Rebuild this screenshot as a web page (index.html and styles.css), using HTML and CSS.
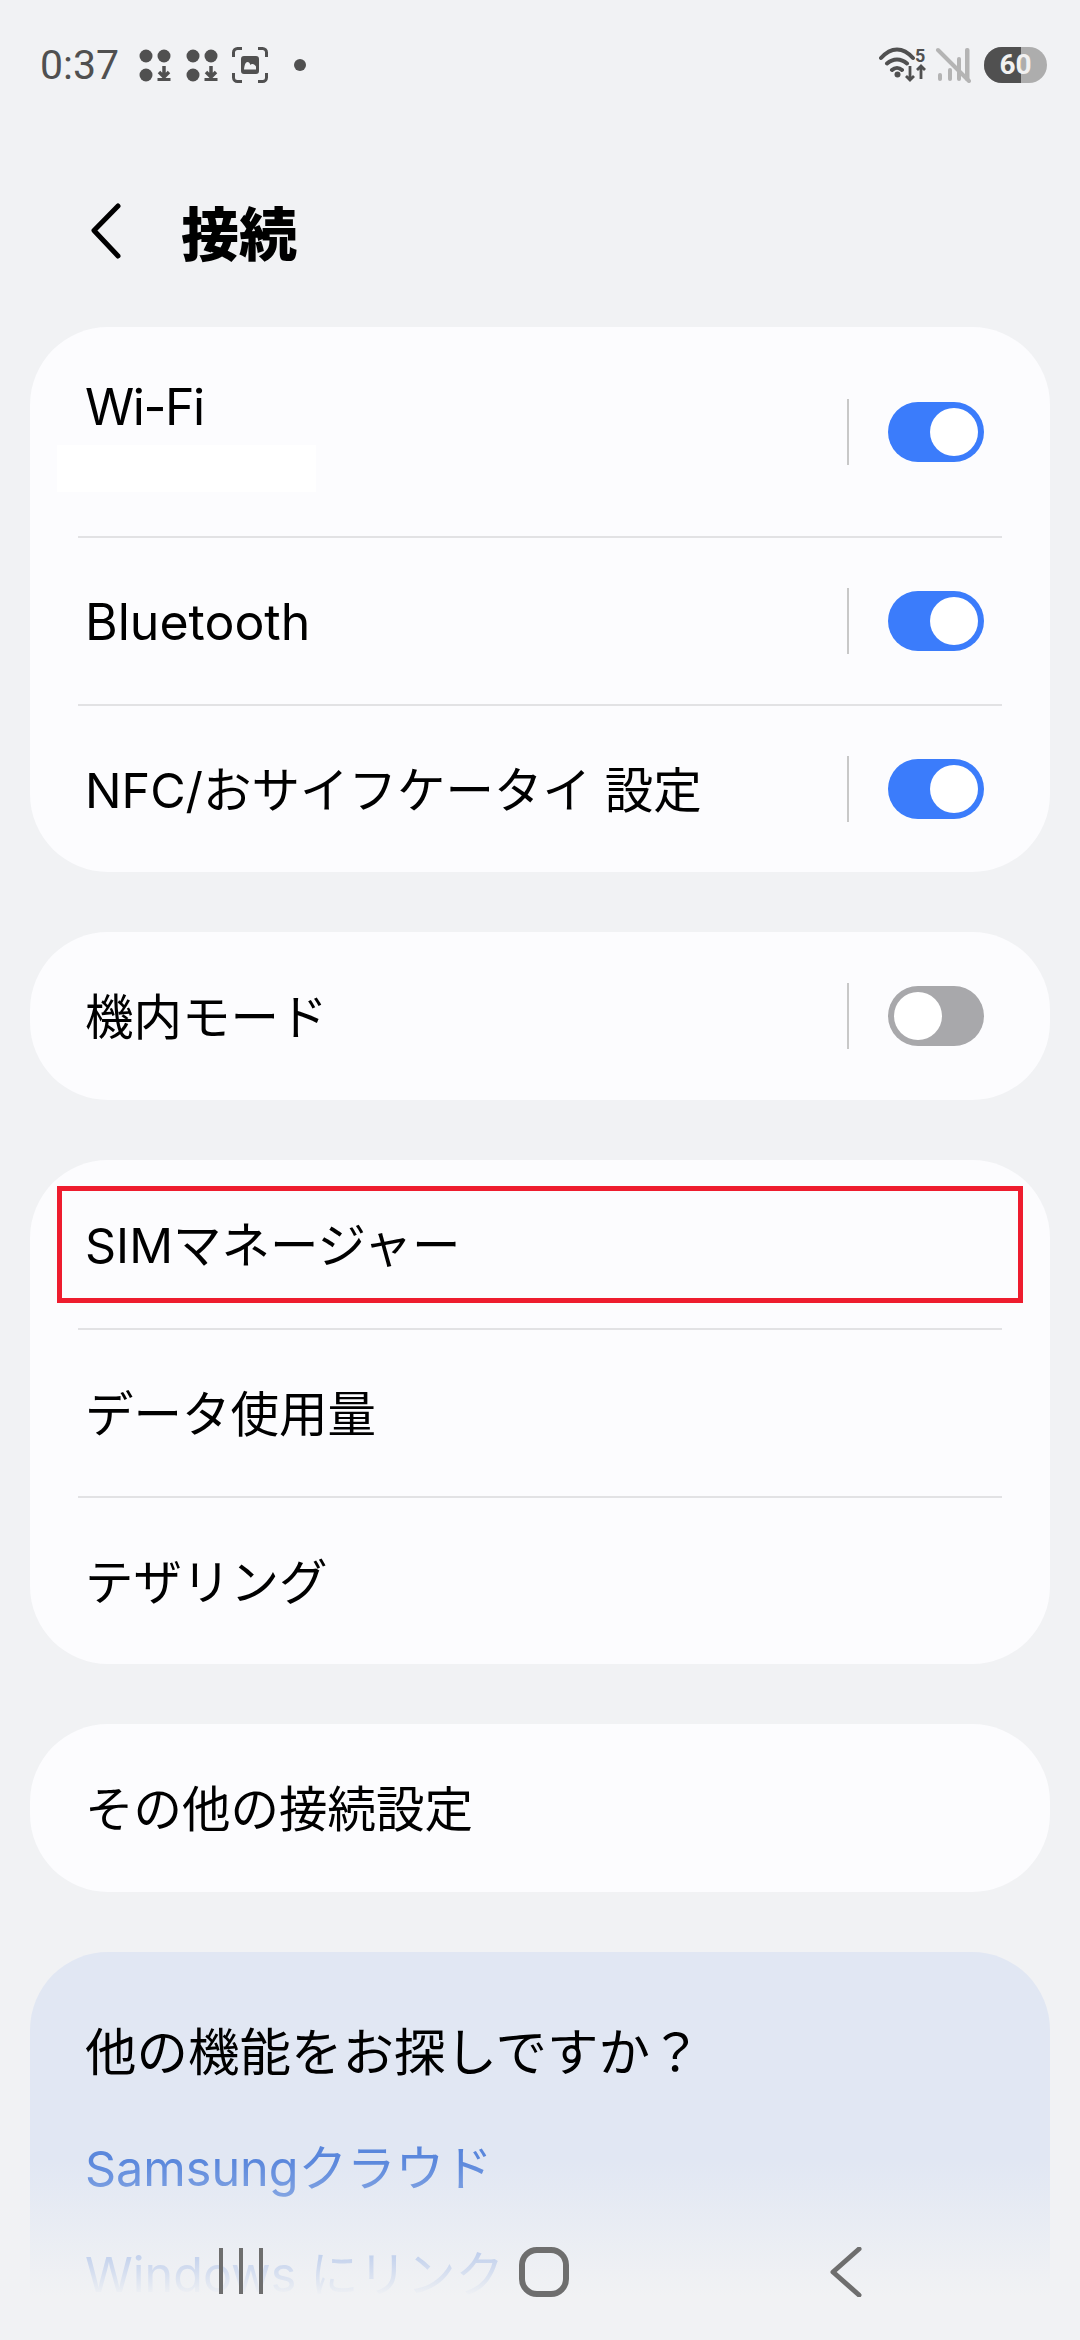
FILE: index.html
```html
<!DOCTYPE html>
<html lang="ja">
<head>
<meta charset="utf-8">
<title>接続</title>
<link rel="stylesheet" href="styles.css">
</head>
<body>
<div class="screen">
  <div class="status">
    <div class="status-left">
      <span class="time">0:37</span>
      <svg class="ic-dl" viewBox="0 0 36 36"><circle cx="7" cy="9" r="6.500"/><circle cx="25" cy="9" r="6.500"/><circle cx="7" cy="28" r="6.500"/><path d="M25 19v11M20 25l5 5 5-5" class="dl-arrow"/><rect x="18.500" y="31" width="13" height="3"/></svg>
      <svg class="ic-dl" viewBox="0 0 36 36"><circle cx="7" cy="9" r="6.500"/><circle cx="25" cy="9" r="6.500"/><circle cx="7" cy="28" r="6.500"/><path d="M25 19v11M20 25l5 5 5-5" class="dl-arrow"/><rect x="18.500" y="31" width="13" height="3"/></svg>
      <svg class="ic-shot" viewBox="0 0 36 36"><path class="shot-frame" d="M1.500 10V5.500a4 4 0 0 1 4-4H10M26 1.500h4.500a4 4 0 0 1 4 4V10M34.500 26v4.500a4 4 0 0 1-4 4H26M10 34.500H5.500a4 4 0 0 1-4-4V26"/><path fill-rule="evenodd" d="M12 9h12a3 3 0 0 1 3 3v12a3 3 0 0 1-3 3H12a3 3 0 0 1-3-3V12a3 3 0 0 1 3-3zm0 13.500h12v-3c-1-1.500-2-2.500-3.500-2.500-1 0-1.500.5-2 1-.8-2-1.500-3-3-3-2 0-3 3-3.500 7.500z"/></svg>
      <span class="dot"></span>
    </div>
    <div class="status-right">
      <div class="wifi-wrap">
        <svg class="ic-wifi" viewBox="0 0 48 36"><path class="wifi-arc" d="M2 11C12 -.5 24 -.5 34 11M8 16.500c6-5.500 14-5.500 20 0M13 23c3-2.800 7-2.800 10 0"/><circle cx="18.500" cy="27.500" r="3"/><path class="wifi-dir" d="M31 19v14M27 29l4 4 4-4M42 32V19M38 23l4-4 4 4"/></svg>
        <span class="wifi-five">5</span>
      </div>
      <svg class="ic-signal" viewBox="0 0 36 36"><rect x="3" y="26" width="4" height="8" rx="2"/><rect x="13" y="21" width="4" height="13" rx="2"/><rect x="22" y="10" width="4" height="24" rx="2"/><rect x="30" y="1" width="4.500" height="33" rx="2"/><path class="signal-cross" d="M3 3l31 31"/></svg>
      <div class="battery"><span class="battery-fill"></span><span class="battery-text">60</span></div>
    </div>
  </div>

  <header class="header">
    <svg class="back" viewBox="0 0 30 56"><path d="M27 3L3 27.500 27 53"/></svg>
    <h1 class="title">接続</h1>
  </header>

  <main class="list">
    <section class="card">
      <div class="row row-wifi">
        <div class="wifi-text">
          <span class="label label-wifi">Wi-Fi</span>
          <span class="masked"></span>
        </div>
        <div class="ctrl"><span class="vline"></span><span class="toggle on"></span></div>
      </div>
      <div class="sep"></div>
      <div class="row"><span class="label label-latin">Bluetooth</span><div class="ctrl"><span class="vline"></span><span class="toggle on"></span></div></div>
      <div class="sep"></div>
      <div class="row"><span class="label">NFC/おサイフケータイ 設定</span><div class="ctrl"><span class="vline"></span><span class="toggle on"></span></div></div>
    </section>

    <section class="card card-single">
      <div class="row"><span class="label">機内モード</span><div class="ctrl"><span class="vline"></span><span class="toggle off"></span></div></div>
    </section>

    <section class="card card-sim">
      <div class="highlight"></div>
      <div class="row row-first"><span class="label">SIMマネージャー</span></div>
      <div class="sep"></div>
      <div class="row"><span class="label">データ使用量</span></div>
      <div class="sep"></div>
      <div class="row"><span class="label">テザリング</span></div>
    </section>

    <section class="card card-single">
      <div class="row"><span class="label">その他の接続設定</span></div>
    </section>

    <section class="card card-more">
      <h2 class="more-title">他の機能をお探しですか？</h2>
      <a class="more-link">Samsungクラウド</a>
      <a class="more-link">Windows にリンク</a>
    </section>
  </main>

  <div class="fade"></div>
  <nav class="nav">
    <svg class="nav-recent" viewBox="0 0 48 48"><path d="M3 1v46M23 1v46M43 1v46"/></svg>
    <svg class="nav-home" viewBox="0 0 50 50"><rect x="3" y="3" width="44" height="44" rx="15"/></svg>
    <svg class="nav-back" viewBox="0 0 32 50"><path d="M29 2L3 25l26 23"/></svg>
  </nav>
</div>
</body>
</html>
```

FILE: styles.css
```css
* { box-sizing: border-box; }
html, body { margin: 0; padding: 0; }
body { width: 1080px; height: 2340px; overflow: hidden; background: #f1f2f4; }

.screen {
  position: relative;
  width: 1080px;
  height: 2340px;
  overflow: hidden;
  background: #f1f2f4;
  color: #000;
  font-family: "Inter", "Noto Sans CJK JP", sans-serif;
}

/* status bar */
.status {
  height: 130px;
  padding: 0 33px 0 40px;
  display: flex;
  justify-content: space-between;
  align-items: flex-start;
  color: #505050;
}
.status-left { display: flex; align-items: center; height: 130px; }
.status-right { display: flex; align-items: center; height: 130px; }
.time { font-family: Roboto, sans-serif; font-size: 41px; line-height: 44px; width: 99px; color: #505050; }
svg { display: block; flex: none; }
.ic-dl { width: 36px; height: 36px; fill: #505050; margin-right: 11px; }
.dl-arrow { fill: none; stroke: #505050; stroke-width: 3.5; }
.ic-shot { width: 36px; height: 36px; fill: #505050; margin-left: -1px; }
.shot-frame { fill: none; stroke: #505050; stroke-width: 3; }
.dot { width: 12px; height: 12px; border-radius: 50%; background: #505050; margin-left: 26px; }

.wifi-wrap { position: relative; width: 48px; height: 36px; margin-right: 8px; }
.ic-wifi { width: 48px; height: 36px; fill: #505050; }
.wifi-arc { fill: none; stroke: #505050; stroke-width: 4; stroke-linecap: round; }
.wifi-dir { fill: none; stroke: #505050; stroke-width: 2.800; }
.wifi-five { position: absolute; left: 36px; top: 0; font-family: Roboto, sans-serif; font-size: 18px; line-height: 18px; font-weight: 700; color: #505050; }
.ic-signal { width: 36px; height: 36px; fill: #b4b4b4; margin-right: 13px; }
.signal-cross { fill: none; stroke: #b4b4b4; stroke-width: 4; stroke-linecap: round; }
.battery {
  position: relative;
  width: 63px;
  height: 36px;
  border-radius: 18px;
  overflow: hidden;
  background: #adadad;
  display: flex;
  align-items: center;
  justify-content: center;
}
.battery-fill { position: absolute; left: 0; top: 0; bottom: 0; width: 37px; background: #505050; }
.battery-text { position: relative; color: #f1f1f1; font-family: Roboto, sans-serif; font-weight: 700; font-size: 28px; line-height: 36px; }

/* header */
.header { height: 197px; padding: 0 0 0 91px; display: flex; align-items: flex-start; }
.back { width: 30px; height: 56px; margin-top: 73px; }
.back path { fill: none; stroke: #000; stroke-width: 5; stroke-linecap: round; stroke-linejoin: round; }
.title { margin: 66px 0 0 60px; font-size: 58px; line-height: 70px; font-weight: 900; font-family: "Noto Sans CJK JP", sans-serif; }

/* list */
.list { padding: 0 30px; display: flex; flex-direction: column; gap: 60px; }
.card { position: relative; background: #fcfcfe; border-radius: 78px; }
.row { height: 166px; padding: 0 66px 0 55px; display: flex; align-items: center; justify-content: space-between; }
.row-wifi { height: 209px; }
.row-first, .card-single .row { height: 168px; }
.label { font-size: 48.500px; line-height: 60px; color: #000; padding-top: 4px; }
.label-latin { font-size: 50px; padding-top: 2px; }
.label-wifi { font-size: 50px; letter-spacing: -1.500px; padding-top: 2px; }
.sep { height: 2px; margin: 0 48px; background: #e2e2e4; }
.wifi-text { display: flex; flex-direction: column; align-self: flex-start; padding-top: 48px; position: relative; }
.masked { display: block; width: 259px; height: 47px; margin: 8px 0 0 -28px; background: #fff; }
.ctrl { display: flex; align-items: center; gap: 39px; }
.vline { width: 2px; height: 66px; background: #c8c8c8; }
.toggle { position: relative; width: 96px; height: 60px; border-radius: 30px; }
.toggle::after { content: ""; position: absolute; top: 6px; width: 48px; height: 48px; border-radius: 50%; background: #fff; }
.toggle.on { background: #3b7cfb; }
.toggle.on::after { right: 6px; }
.toggle.off { background: #a8a8ab; }
.toggle.off::after { left: 6px; }

.highlight { position: absolute; left: 27px; top: 26px; width: 966px; height: 117px; border: 5px solid #ee1c2e; }

.card-more { height: 500px; padding: 65px 55px 0; background: #e1e7f3; }
.more-title { margin: 0; padding-bottom: 6px; font-size: 51.500px; line-height: 70px; font-weight: 400; }
.more-link { display: block; margin-top: 46px; font-size: 48.500px; line-height: 60px; color: #5a87dc; }

/* bottom overlay */
.fade {
  position: absolute;
  left: 0;
  right: 0;
  top: 2160px;
  height: 180px;
  background: linear-gradient(to bottom, rgba(241, 242, 244, 0), #f1f2f4 76%);
}
.nav { position: absolute; left: 0; right: 0; top: 2247px; height: 48px; }
.nav svg { position: absolute; top: 0; }
.nav path, .nav rect { fill: none; stroke: #6e6e6e; }
.nav-recent { left: 218px; width: 48px; height: 48px; }
.nav-recent path { stroke-width: 4; }
.nav-home { left: 519px; width: 50px; height: 50px; }
.nav-home rect { stroke-width: 6; }
.nav-back { left: 830px; width: 32px; height: 50px; }
.nav-back path { stroke-width: 5; stroke-linecap: round; stroke-linejoin: round; }
```
